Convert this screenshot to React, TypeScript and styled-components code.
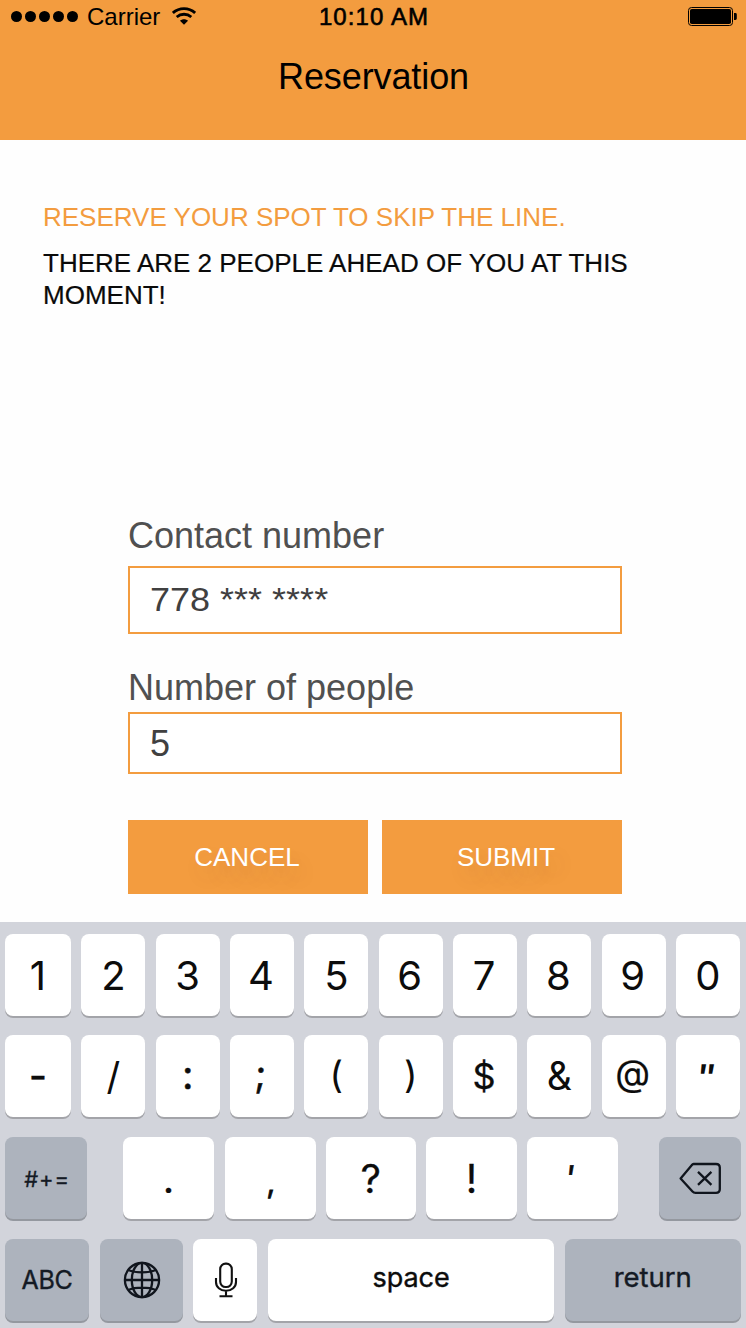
import React from 'react';
import styled, { createGlobalStyle } from 'styled-components';

const ORANGE = '#f39c3f';

const GlobalStyle = createGlobalStyle`
  * { box-sizing: border-box; }
  body {
    margin: 0;
    background: #fefefe;
    font-family: "Liberation Sans", Arial, sans-serif;
  }
`;

const Screen = styled.div`
  width: 746px;
  height: 1328px;
  display: flex;
  flex-direction: column;
  overflow: hidden;
  background: #fefefe;
`;

const Header = styled.header`
  height: 140px;
  background: ${ORANGE};
  color: #000;
`;

const StatusBar = styled.div`
  height: 33px;
  padding: 0 9px 0 11px;
  display: grid;
  grid-template-columns: 1fr auto 1fr;
  align-items: center;
  font-size: 24px;
  line-height: 32px;
`;

const Signal = styled.div`
  display: flex;
  align-items: center;
`;

const Dots = styled.div`
  display: flex;
  gap: 3px;
  margin-right: 9px;
`;

const Dot = styled.span`
  width: 11px;
  height: 11px;
  border-radius: 50%;
  background: #000;
`;

const Carrier = styled.span`
  margin-right: 11.5px;
  padding-top: 1px;
`;

const Clock = styled.div`
  padding-top: 1px;
  letter-spacing: 1.1px;
  -webkit-text-stroke: 0.6px #000;
`;

const Battery = styled.div`
  justify-self: end;
  display: flex;
`;

const Title = styled.h1`
  margin: 22px 0 0;
  padding-left: 1px;
  font-size: 36px;
  line-height: 44px;
  font-weight: 400;
  letter-spacing: -0.1px;
  text-align: center;
`;

const Intro = styled.section`
  height: 374px;
  padding: 61px 43px 0;
  font-size: 26px;
  line-height: 32px;
`;

const Headline = styled.p`
  margin: 0 0 14px;
  color: ${ORANGE};
  white-space: nowrap;
`;

const QueueNote = styled.p`
  margin: 0;
  color: #0a0a0a;
  white-space: nowrap;
  -webkit-text-stroke: 0.2px #0a0a0a;
`;

const Form = styled.form`
  width: 494px;
  height: 408px;
  margin-left: 128px;
  display: flex;
  flex-direction: column;
`;

const Label = styled.label<{ $above?: number; $below: number }>`
  margin: ${(p) => p.$above ?? 0}px 0 ${(p) => p.$below}px;
  font-size: 36px;
  line-height: 44px;
  color: #505050;
`;

const Field = styled.div<{ $height: number; $drop?: number }>`
  height: ${(p) => p.$height}px;
  flex: none;
  display: flex;
  align-items: center;
  padding: ${(p) => p.$drop ?? 0}px 0 0 20px;
  border: 2px solid ${ORANGE};
  background: #fff;
  font-size: 36px;
  color: #404040;
`;

const PhoneValue = styled.span`
  transform: scaleY(0.92);
`;

const Actions = styled.div`
  display: flex;
  gap: 14px;
  margin-top: 46px;
`;

const ActionButton = styled.button<{ $left?: number; $right?: number }>`
  width: 240px;
  height: 74px;
  padding: 0 ${(p) => p.$right ?? 0}px 0 ${(p) => p.$left ?? 0}px;
  border: 0;
  background: ${ORANGE};
  color: #fff;
  font: 400 26px "Liberation Sans", Arial, sans-serif;
  text-shadow: 6px 11px 20px rgba(90, 90, 60, 0.15);
`;

const Keyboard = styled.div`
  height: 406px;
  padding: 11.5px 5px 0;
  display: flex;
  flex-direction: column;
  gap: 19.8px;
  background: #d2d4db;
  font-family: Inter, "Liberation Sans", sans-serif;
`;

const KeyRow = styled.div<{ $columns: string; $gap?: number }>`
  height: 82px;
  flex: none;
  display: grid;
  grid-template-columns: ${(p) => p.$columns};
  column-gap: ${(p) => p.$gap ?? 0}px;
`;

const Key = styled.div<{ $dark?: boolean; $col?: number; $nudge?: number }>`
  display: flex;
  align-items: center;
  justify-content: center;
  padding-left: ${(p) => p.$nudge ?? 0}px;
  border-radius: 8px;
  background: ${(p) => (p.$dark ? '#adb3bd' : '#fff')};
  box-shadow: 0 2px 0 ${(p) => (p.$dark ? '#94989f' : '#a3a4a9')};
  color: ${(p) => (p.$dark ? '#141a24' : '#0c0c0c')};
  grid-column: ${(p) => p.$col ?? 'auto'};
`;

const Legend = styled.span<{
  $size?: number;
  $x?: number;
  $y?: number;
  $slant?: number;
  $stretch?: number;
  $track?: number;
  $bold?: number;
}>`
  font-size: ${(p) => p.$size ?? 40}px;
  line-height: 1.2;
  letter-spacing: ${(p) => p.$track ?? 0}px;
  -webkit-text-stroke: ${(p) => p.$bold ?? 0}px currentColor;
  transform: translate(${(p) => p.$x ?? 0}px, ${(p) => p.$y ?? 0}px)
    skewX(${(p) => -(p.$slant ?? 0)}deg) scaleX(${(p) => p.$stretch ?? 1});
`;

type KeySpec = {
  t: string;
  x?: number;
  y?: number;
  slant?: number;
  stretch?: number;
  size?: number;
  bold?: number;
};

const numbers: KeySpec[] = [
  { t: '1', y: 1 }, { t: '2', y: 1 }, { t: '3', y: 1 }, { t: '4', x: -1, y: 1 }, { t: '5', y: 1 },
  { t: '6', x: -1, y: 1 }, { t: '7', x: -1, y: 1 }, { t: '8', x: -1, y: 1 }, { t: '9', x: -1, y: 1 }, { t: '0', y: 1 },
];

const symbols: KeySpec[] = [
  { t: '-', y: 0, bold: 0.3 },
  { t: '/', size: 38 },
  { t: ':', y: -1, bold: 0.5 },
  { t: ';', x: -1, y: -2, slant: 2, size: 37, bold: 0.5 },
  { t: '(', y: -1, size: 37 },
  { t: ')', y: -1, size: 37 },
  { t: '$', x: -1, size: 36, bold: 0.3 },
  { t: '&', size: 39 },
  { t: '@', x: -1, y: -3, size: 36, bold: 0.2 },
  { t: '"', x: -2, y: 1, slant: 8, stretch: 1.4, size: 34 },
];

const punctuation: KeySpec[] = [
  { t: '.', y: 1, bold: 0.2 },
  { t: ',', x: 1, y: 4, slant: 2, size: 30, bold: 0.8 },
  { t: '?', y: 1, bold: 0.3 },
  { t: '!', y: 1, bold: 0.3 },
  { t: "'", x: -2, y: 0, slant: 8, size: 34, bold: 0.6 },
];

const Keys = ({ specs, offset }: { specs: KeySpec[]; offset?: number }) => (
  <>
    {specs.map((k, i) => (
      <Key key={k.t} $col={offset ? offset + i * 2 : undefined}>
        <Legend $x={k.x} $y={k.y} $slant={k.slant} $stretch={k.stretch} $size={k.size} $bold={k.bold}>
          {k.t}
        </Legend>
      </Key>
    ))}
  </>
);

const WifiSvg = styled.svg`
  margin-bottom: 2px;
`;

const WifiIcon = () => (
  <WifiSvg width="24" height="18" viewBox="0 0 24 18" fill="none" stroke="#000" strokeWidth="2.8">
    <path d="M0.9 5.9C7.2 0.2 16.8 0.2 23.1 5.9" />
    <path d="M4.7 10C9 6.3 15 6.3 19.3 10" />
    <path d="M8 13.7C10.3 11.7 13.7 11.7 16 13.7L12 17.7Z" fill="#000" stroke="none" />
  </WifiSvg>
);

const BatteryIcon = () => (
  <svg width="49" height="19" viewBox="0 0 49 19">
    <rect x="0.5" y="0.5" width="44" height="18" rx="3" fill="none" stroke="#000" />
    <rect x="2" y="2" width="41" height="15" rx="1.8" fill="#000" />
    <path d="M46 6h1.4a1.4 1.4 0 0 1 1.4 1.4v4.2a1.4 1.4 0 0 1-1.4 1.4H46z" fill="#000" />
  </svg>
);

const GlobeIcon = () => (
  <svg width="38" height="38" viewBox="0 0 38 38" fill="none" stroke="#10151d" strokeWidth="2.3">
    <circle cx="19" cy="19" r="17.1" />
    <ellipse cx="19" cy="19" rx="10.2" ry="17.1" />
    <path d="M19 1.9V36.1M1.9 19H36.1M5.2 9C12.5 12.2 25.5 12.2 32.8 9M5.2 29C12.5 25.8 25.5 25.8 32.8 29" />
  </svg>
);

const MicIcon = () => (
  <svg width="24" height="36" viewBox="0 0 24 36" fill="none" stroke="#111" strokeWidth="2.1">
    <rect x="6.2" y="1.6" width="11.6" height="23.4" rx="5.4" />
    <path d="M2 16v4c0 5 4.2 8.8 10 8.8s10-3.8 10-8.8v-4M12 28.8v5.4M5.5 34.2h13" />
  </svg>
);

const BackspaceIcon = () => (
  <svg width="44" height="32" viewBox="0 0 44 32" fill="none" stroke="#10151d" strokeWidth="2.3" strokeLinejoin="round">
    <path d="M14.5 2H37c2.6 0 3.8 1.2 3.8 3.6v21.6c0 2.4-1.2 3.6-3.8 3.6H16.5c-1.4 0-2.2-.4-3-1.3L1.6 16.4 12.5 3.5c.7-.9 1.1-1.5 2-1.5Z" />
    <path d="M19 9.9 32.4 22.9M32.4 9.9 19 22.9" />
  </svg>
);

export default function App() {
  return (
    <>
      <GlobalStyle />
      <Screen>
        <Header>
          <StatusBar>
            <Signal>
              <Dots>
                {[0, 1, 2, 3, 4].map((n) => <Dot key={n} />)}
              </Dots>
              <Carrier>Carrier</Carrier>
              <WifiIcon />
            </Signal>
            <Clock>10:10 AM</Clock>
            <Battery><BatteryIcon /></Battery>
          </StatusBar>
          <Title>Reservation</Title>
        </Header>
        <Intro>
          <Headline>RESERVE YOUR SPOT TO SKIP THE LINE.</Headline>
          <QueueNote>THERE ARE 2 PEOPLE AHEAD OF YOU AT THIS<br />MOMENT!</QueueNote>
        </Intro>
        <Form>
          <Label $below={8}>Contact number</Label>
          <Field $height={68}><PhoneValue>778 *** ****</PhoneValue></Field>
          <Label $above={32} $below={2}>Number of people</Label>
          <Field $height={62} $drop={2}>5</Field>
          <Actions>
            <ActionButton type="button" $right={2}>CANCEL</ActionButton>
            <ActionButton type="button" $left={8}>SUBMIT</ActionButton>
          </Actions>
        </Form>
        <Keyboard>
          <KeyRow $columns="66px repeat(9, 64px)" $gap={10.34}><Keys specs={numbers} /></KeyRow>
          <KeyRow $columns="66px repeat(9, 64px)" $gap={10.34}><Keys specs={symbols} /></KeyRow>
          <KeyRow $columns="82px 36px 91px 10.5px 91px 10.5px 89.5px 10.5px 91px 10px 91px 41px 82px">
            <Key $dark><Legend $size={22} $x={1} $y={1} $track={0.9} $bold={0.3}>#+=</Legend></Key>
            <Keys specs={punctuation} offset={3} />
            <Key $dark $col={13} $nudge={2}><BackspaceIcon /></Key>
          </KeyRow>
          <KeyRow $columns="84px 83px 64px 286px 176px" $gap={10.7}>
            <Key $dark><Legend $size={25} $track={-0.3} $bold={0.4}>ABC</Legend></Key>
            <Key $dark $nudge={1}><GlobeIcon /></Key>
            <Key $nudge={2}><MicIcon /></Key>
            <Key><Legend $size={27} $y={-2} $bold={0.4}>space</Legend></Key>
            <Key $dark><Legend $size={27.5} $y={-2} $bold={0.4}>return</Legend></Key>
          </KeyRow>
        </Keyboard>
      </Screen>
    </>
  );
}
